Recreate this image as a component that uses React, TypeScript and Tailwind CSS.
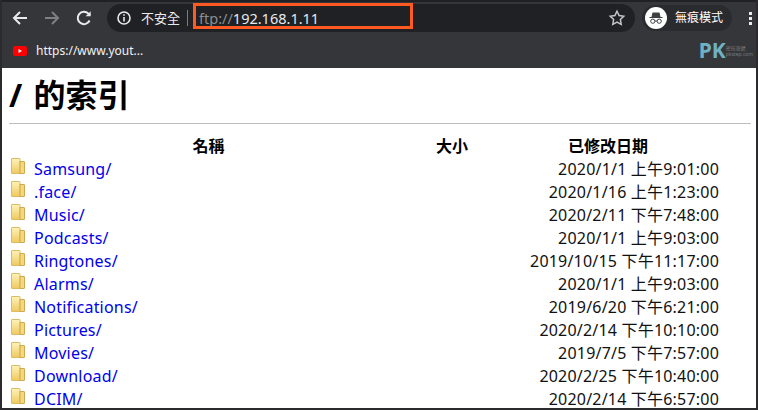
const rows: [string, string][] = [
  ["Samsung/", "2020/1/1 上午9:01:00"],
  [".face/", "2020/1/16 上午1:23:00"],
  ["Music/", "2020/2/11 下午7:48:00"],
  ["Podcasts/", "2020/1/1 上午9:03:00"],
  ["Ringtones/", "2019/10/15 下午11:17:00"],
  ["Alarms/", "2020/1/1 上午9:03:00"],
  ["Notifications/", "2019/6/20 下午6:21:00"],
  ["Pictures/", "2020/2/14 下午10:10:00"],
  ["Movies/", "2019/7/5 下午7:57:00"],
  ["Download/", "2020/2/25 下午10:40:00"],
  ["DCIM/", "2020/2/14 下午6:57:00"],
];

const font = { fontFamily: '"Noto Sans", "Noto Sans CJK TC", sans-serif' };

function Folder() {
  return (
    <svg width="14" height="16" viewBox="0 0 14 16" className="shrink-0">
      <defs>
        <linearGradient id="fg" x1="0" y1="0" x2="0" y2="1">
          <stop offset="0" stopColor="#fff3b8" />
          <stop offset="1" stopColor="#eec95f" />
        </linearGradient>
      </defs>
      <path d="M0.5 1 Q0.5 0.5 1 0.5 H8.5 Q9 0.5 9 1 V15.5 H1 Q0.5 15.5 0.5 15 Z" fill="url(#fg)" stroke="#dcbb62" />
      <path d="M9 3.5 H13 Q13.5 3.5 13.5 4 V15 Q13.5 15.5 13 15.5 H9 Z" fill="#f4d77f" stroke="#cfa94e" />
    </svg>
  );
}

export default function App() {
  return (
    <div className="w-[758px] h-[410px] overflow-hidden bg-white flex flex-col border-x-2 border-b-2 border-[#2b2b2d]" style={font}>
      <div className="h-[68px] shrink-0 bg-[#35363a] border-t-2 border-[#202124] flex flex-col">
        <div className="h-[30px] flex items-center mt-[1px]">
          <svg width="18" height="18" viewBox="0 0 18 18" className="ml-[9px]" fill="none" stroke="#e8eaed" strokeWidth="2">
            <path d="M16 9H3M9 3L3 9l6 6" />
          </svg>
          <svg width="18" height="18" viewBox="0 0 18 18" className="ml-[14px]" fill="none" stroke="#7e8083" strokeWidth="2">
            <path d="M2 9h13M9 3l6 6-6 6" />
          </svg>
          <svg width="18" height="18" viewBox="0 0 18 18" className="ml-[14px]" fill="none" stroke="#e8eaed" strokeWidth="2">
            <path d="M14.6 11.5A6.2 6.2 0 1 1 13.4 4.6L15 6.2" />
            <path d="M15.7 2.2V7.3H10.6Z" fill="#e8eaed" stroke="none" />
          </svg>
          <div className="ml-[14px] w-[528px] h-[28px] rounded-full bg-[#202124] flex items-center relative">
            <svg width="16" height="16" viewBox="0 0 16 16" className="ml-[9px]" fill="none" stroke="#e8eaed" strokeWidth="1.6">
              <circle cx="8" cy="8" r="6" />
              <path d="M8 7v4.5M8 4.2v1.6" />
            </svg>
            <span className="ml-[9px] text-[13px] text-[#e8eaed] leading-none">不安全</span>
            <div className="ml-[7px] w-px h-[16px] bg-[#7a7c80]" />
            <div className="absolute left-[86px] -top-[1px] w-[220px] h-[26px] border-[3px] border-[#ff5a22]" />
            <span className="ml-[11px] text-[14.5px] leading-none text-[#8a8d91]">ftp://<span className="text-[#e8eaed]">192.168.1.11</span></span>
            <svg width="18" height="18" viewBox="0 0 24 24" className="ml-auto mr-[9px]" fill="none" stroke="#c4c6c9" strokeWidth="2">
              <path d="M12 3l2.8 5.8 6.2.9-4.5 4.4 1.1 6.3L12 17.4 6.4 20.4l1.1-6.3L3 9.7l6.2-.9z" />
            </svg>
          </div>
          <div className="ml-[7px] w-[90px] h-[26px] rounded-full bg-[#2a2b2e] flex items-center">
            <div className="ml-[3px] w-[22px] h-[22px] rounded-full bg-white flex items-center justify-center">
              <svg width="18" height="18" viewBox="0 0 18 18">
                <path d="M2.5 8h13v1h-13zM5.5 3.5h7L13.5 8h-9z" fill="#3c4043" />
                <circle cx="5.8" cy="12.2" r="2.1" fill="none" stroke="#3c4043" strokeWidth="1" />
                <circle cx="12.2" cy="12.2" r="2.1" fill="none" stroke="#3c4043" strokeWidth="1" />
                <path d="M7.9 12h2.2" stroke="#3c4043" />
              </svg>
            </div>
            <span className="ml-[8px] text-[12px] text-white leading-none">無痕模式</span>
          </div>
          <div className="ml-[17px] flex flex-col gap-[2px]">
            <div className="w-[3px] h-[3px] bg-[#e8eaed]" />
            <div className="w-[3px] h-[3px] bg-[#e8eaed]" />
            <div className="w-[3px] h-[3px] bg-[#e8eaed]" />
          </div>
        </div>
        <div className="flex-1 flex items-center">
          <svg width="14" height="10" viewBox="0 0 14 10" className="ml-[11px]">
            <rect width="14" height="10" rx="2.5" fill="#f00" />
            <path d="M5.5 3v4L9 5z" fill="#fff" />
          </svg>
          <span className="ml-[9px] text-[12px] text-[#f1f3f4] leading-none">https://www.yout...</span>
          <div className="ml-auto mr-[3px] flex items-center h-[22px]">
            <span className="text-[21px] font-bold text-[#6fb1c4] leading-none">PK</span>
            <div className="flex flex-col text-[5px] leading-[6px] text-[#77797d]">
              <span>密技旅館</span>
              <span>pkstep.com</span>
            </div>
          </div>
        </div>
      </div>

      <div className="flex-1 min-h-0 overflow-hidden pl-[7px] pr-[5px] text-black">
        <h1 className="text-[32px] font-bold leading-[44px] mt-[5px] [word-spacing:3px]">/ 的索引</h1>
        <div className="h-px bg-[#bdbdbd] mt-[6px]" />
        <div className="grid grid-cols-[400px_80px_1fr] h-[23px] items-center mt-[10px] text-[16px] font-bold leading-none">
          <span className="text-center pl-[1px] w-[398px]">名稱</span>
          <span className="text-center pl-[6px] w-[80px]">大小</span>
          <span className="pl-[79px]">已修改日期</span>
        </div>
        <div className="flex flex-col">
          {rows.map(([name, date]) => (
            <div key={name} className="h-[23px] flex items-center text-[16px] leading-none tracking-[0.2px]">
              <div className="ml-[2px] -mt-[5px]"><Folder /></div>
              <span className="ml-[9px] text-[#0000ee]">{name}</span>
              <span className="ml-auto mr-[32px] text-[#111]">{date}</span>
            </div>
          ))}
        </div>
      </div>
    </div>
  );
}
